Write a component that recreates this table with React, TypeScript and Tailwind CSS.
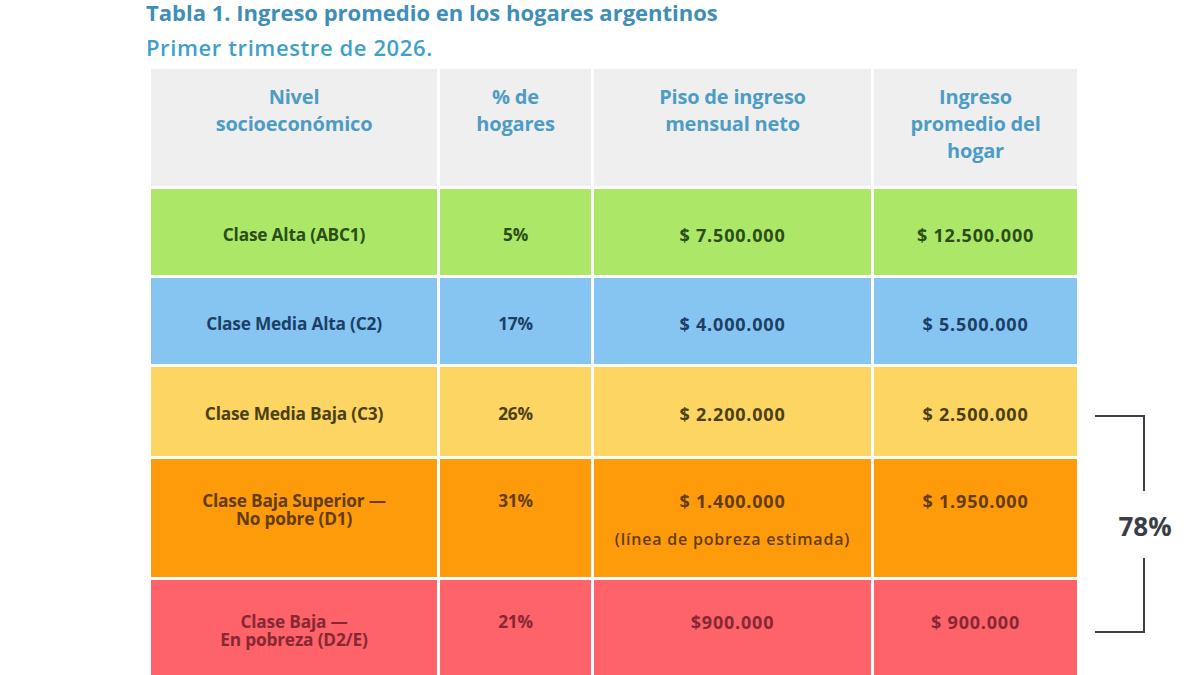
const rows = [
  {
    bg: 'bg-[#ade767]',
    text: 'text-[#2b4d19]',
    h: 'h-[86px]',
    top: false,
    cells: [['Clase Alta (ABC1)'], ['5%'], ['$ 7.500.000'], ['$ 12.500.000']],
  },
  {
    bg: 'bg-[#86c5f2]',
    text: 'text-[#1c3f66]',
    h: 'h-[86px]',
    top: false,
    cells: [['Clase Media Alta (C2)'], ['17%'], ['$ 4.000.000'], ['$ 5.500.000']],
  },
  {
    bg: 'bg-[#fdd563]',
    text: 'text-[#4b4014]',
    h: 'h-[89px]',
    top: false,
    cells: [['Clase Media Baja (C3)'], ['26%'], ['$ 2.200.000'], ['$ 2.500.000']],
  },
  {
    bg: 'bg-[#fe9b0a]',
    text: 'text-[#643c0e]',
    h: 'h-[118px]',
    top: true,
    cells: [['Clase Baja Superior —', 'No pobre (D1)'], ['31%'], ['$ 1.400.000'], ['$ 1.950.000']],
  },
  {
    bg: 'bg-[#fe636a]',
    text: 'text-[#862834]',
    h: 'h-[118px]',
    top: true,
    cells: [['Clase Baja —', 'En pobreza (D2/E)'], ['21%'], ['$900.000'], ['$ 900.000']],
  },
];

const headers = [
  ['Nivel', 'socioeconómico'],
  ['% de', 'hogares'],
  ['Piso de ingreso', 'mensual neto'],
  ['Ingreso', 'promedio del', 'hogar'],
];

export default function App() {
  return (
    <div
      className="w-[1200px] h-[675px] overflow-hidden bg-white pl-[146px]"
      style={{ fontFamily: '"Open Sans", Lato, sans-serif' }}
    >
      <h1 className="text-[22px] leading-[24px] font-bold text-[#3e8eb7] tracking-[0px]">
        Tabla 1. Ingreso promedio en los hogares argentinos
      </h1>
      <p className="mt-[11px] text-[22px] leading-[24px] font-semibold text-[#3f9fcb] tracking-[0.6px]">
        Primer trimestre de 2026.
      </p>

      <div className="mt-[10px] ml-[5px] flex items-start">
        <div className="grid grid-cols-[286px_151px_277px_203px] gap-[3px] bg-white">
          {headers.map((lines, i) => (
            <div
              key={i}
              className="h-[117px] bg-[#efeff0] pt-[14px] text-center text-[20px] leading-[27px] font-bold text-[#4d9cc3] tracking-[-0.2px]"
            >
              {lines.map((l) => (
                <div key={l}>{l}</div>
              ))}
            </div>
          ))}

          {rows.map((row, r) =>
            row.cells.map((lines, c) => (
              <div
                key={`${r}-${c}`}
                className={`${row.bg} ${row.text} ${row.h} flex flex-col items-center text-center font-bold ${
                  row.top ? 'justify-start pt-[33px] leading-[18px]' : 'justify-center pt-[5px] leading-[20px]'
                } ${c >= 2 ? 'text-[18px] tracking-[0.8px]' : 'text-[17.3px] tracking-[-0.2px]'}`}
              >
                {lines.map((l) => (
                  <div key={l}>{l}</div>
                ))}
                {r === 3 && c === 2 && (
                  <div className="mt-[20px] text-[16px] leading-[18px] font-semibold tracking-[0.8px]">
                    (línea de pobreza estimada)
                  </div>
                )}
              </div>
            ))
          )}
        </div>

        <div className="ml-[18px] mt-[346px] w-[100px] flex flex-col">
          <div className="w-[50px] h-[76px] border-t-2 border-r-2 border-[#3c4147]" />
          <div className="h-[67px] flex items-center justify-center pt-[4px] text-[26px] font-bold text-[#3a3f45]">
            78%
          </div>
          <div className="w-[50px] h-[75px] border-b-2 border-r-2 border-[#3c4147]" />
        </div>
      </div>
    </div>
  );
}
